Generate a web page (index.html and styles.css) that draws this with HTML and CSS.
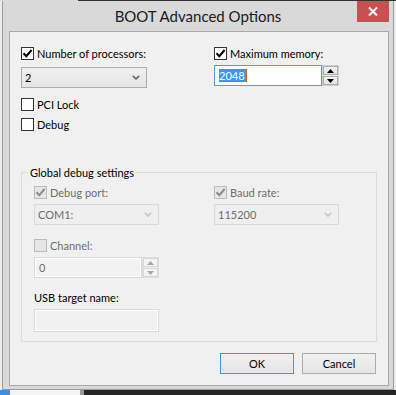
FILE: index.html
```html
<!DOCTYPE html>
<html lang="en">
<head>
<meta charset="utf-8">
<title>BOOT Advanced Options</title>
<link rel="stylesheet" href="styles.css">
</head>
<body>
<div class="window">
  <div class="titlebar">
    <span class="title">BOOT Advanced Options</span>
    <div class="close">
      <svg width="10" height="9" viewBox="0 0 10 9"><path d="M1 0.5 L9 8.5 M9 0.5 L1 8.5" stroke="#fff" stroke-width="2" fill="none"/></svg>
    </div>
  </div>
  <div class="client">
    <div class="cols top">
      <div class="col">
        <div class="check-row">
          <span class="cb"><svg class="tick" width="11" height="11" viewBox="0 0 11 11"><path d="M1.5 5.2 L4.3 8.2 L9.6 2" /></svg></span>
          <span>Number of processors:</span>
        </div>
        <div class="combo first">
          <span class="val">2</span>
          <svg class="chev" width="8" height="5" viewBox="0 0 8 5"><path d="M0.8 0.8 L4 4 L7.2 0.8"/></svg>
        </div>
        <div class="check-row pci"><span class="cb"></span><span>PCI Lock</span></div>
        <div class="check-row dbg"><span class="cb"></span><span>Debug</span></div>
      </div>
      <div class="col">
        <div class="check-row">
          <span class="cb"><svg class="tick" width="11" height="11" viewBox="0 0 11 11"><path d="M1.5 5.2 L4.3 8.2 L9.6 2" /></svg></span>
          <span>Maximum memory:</span>
        </div>
        <div class="spin mem">
          <div class="spin-input focused"><span class="sel">2048</span><span class="caret"></span></div>
          <div class="spin-btns">
            <span class="sb"><svg width="7" height="4" viewBox="0 0 7 4"><polygon points="0,4 3.5,0 7,4"/></svg></span>
            <span class="sb"><svg width="7" height="4" viewBox="0 0 7 4"><polygon points="0,0 7,0 3.5,4"/></svg></span>
          </div>
        </div>
      </div>
    </div>

    <fieldset class="group">
      <legend>Global debug settings</legend>
      <div class="group-body">
        <div class="cols inner">
          <div class="col">
            <div class="check-row disabled">
              <span class="cb"><svg class="tick" width="11" height="11" viewBox="0 0 11 11"><path d="M1.5 5.2 L4.3 8.2 L9.6 2" /></svg></span>
              <span>Debug port:</span>
            </div>
            <div class="combo disabled">
              <span class="val">COM1:</span>
              <svg class="chev" width="8" height="5" viewBox="0 0 8 5"><path d="M0.8 0.8 L4 4 L7.2 0.8"/></svg>
            </div>
          </div>
          <div class="col">
            <div class="check-row disabled">
              <span class="cb"><svg class="tick" width="11" height="11" viewBox="0 0 11 11"><path d="M1.5 5.2 L4.3 8.2 L9.6 2" /></svg></span>
              <span>Baud rate:</span>
            </div>
            <div class="combo disabled">
              <span class="val">115200</span>
              <svg class="chev" width="8" height="5" viewBox="0 0 8 5"><path d="M0.8 0.8 L4 4 L7.2 0.8"/></svg>
            </div>
          </div>
        </div>
        <div class="check-row disabled channel"><span class="cb"></span><span>Channel:</span></div>
        <div class="spin disabled chan">
          <div class="spin-input"><span class="plain">0</span></div>
          <div class="spin-btns">
            <span class="sb"><svg width="7" height="4" viewBox="0 0 7 4"><polygon points="0,4 3.5,0 7,4"/></svg></span>
            <span class="sb"><svg width="7" height="4" viewBox="0 0 7 4"><polygon points="0,0 7,0 3.5,4"/></svg></span>
          </div>
        </div>
        <div class="usb-label">USB target name:</div>
        <div class="textbox disabled"></div>
      </div>
    </fieldset>

    <div class="buttons">
      <button class="btn default">OK</button>
      <button class="btn">Cancel</button>
    </div>
  </div>
</div>
</body>
</html>
```

FILE: styles.css
```css
* { box-sizing: border-box; }
html, body { margin: 0; padding: 0; }

body {
  width: 396px;
  height: 395px;
  overflow: hidden;
  font-family: Lato, "Liberation Sans", sans-serif;
  font-size: 11px;
  color: #000;
  background:
    linear-gradient(to right, #3d8fdf 0, #3d8fdf 10px, #f5f5f5 10px, #f5f5f5 80px, #9a9a9a 80px, #9a9a9a 84px, #262626 84px) left bottom / 100% 5px no-repeat,
    linear-gradient(to right, #dadada 0, #dadada 78px, #303030 78px) left top / 100% 1px no-repeat,
    #ececec;
}

.window {
  margin: 1px 0 0 2px;
  width: 392px;
  height: 389px;
  background: #d9d9d9;
  border: 1px solid #9c9c9c;
  border-top: 0;
  display: flex;
  flex-direction: column;
  position: relative;
}

.titlebar {
  height: 30px;
  flex: none;
  display: flex;
  align-items: center;
  justify-content: center;
}

.title {
  font-size: 15px;
  line-height: 30px;
  color: #1a1a1a;
}

.close {
  position: absolute;
  top: 0;
  right: 4px;
  width: 32px;
  height: 21px;
  background: #c75050;
  display: flex;
  align-items: center;
  justify-content: center;
}

.client {
  flex: 1;
  margin: 0 4px 3px 6px;
  border: 1px solid #a9a9a9;
  background: #f0f0f0;
  padding: 15px 11px 0 11px;
  display: flex;
  flex-direction: column;
}

.cols { display: grid; }
.cols.top { grid-template-columns: 193px 1fr; }
.cols.inner { grid-template-columns: 180px 1fr; }
.col { display: flex; flex-direction: column; align-items: flex-start; }

.check-row {
  display: flex;
  align-items: center;
  gap: 3px;
  height: 13px;
  line-height: 13px;
  white-space: nowrap;
}
.check-row.pci { margin-top: 10px; }
.check-row.dbg { margin-top: 7px; }
.check-row.channel { margin-top: 14px; }

.cb {
  flex: none;
  width: 13px;
  height: 13px;
  border: 1px solid #333;
  background: #fff;
  display: flex;
}
.tick path {
  fill: none;
  stroke: #000;
  stroke-width: 2;
}

.check-row.disabled { color: #6d6d6d; }
.check-row.disabled .cb { border-color: #bcbcbc; background: #e6e6e6; }
.check-row.disabled .tick path { stroke: #8d8d8d; }

.combo {
  margin-top: 5px;
  width: 125px;
  height: 21px;
  border: 1px solid #acacac;
  background: linear-gradient(#f0f0f0, #e5e5e5);
  display: flex;
  align-items: center;
  justify-content: space-between;
  padding: 0 6px 0 3px;
}
.combo.first { margin-top: 7px; width: 126px; }
.combo .val { line-height: 13px; }
.chev path {
  fill: none;
  stroke: #5f5f5f;
  stroke-width: 1.6;
}
.combo.disabled {
  border-color: #d9d9d9;
  background: #efefef;
  color: #6d6d6d;
}
.combo.disabled .chev path { stroke: #c4c4c4; }

.spin {
  display: flex;
  height: 21px;
}
.spin.mem { margin-top: 5px; }
.spin.chan { margin-top: 5px; }

.spin-input {
  width: 108px;
  height: 21px;
  border: 1px solid #acacac;
  background: #fff;
  display: flex;
  align-items: center;
  padding-left: 4px;
}
.spin-input.focused { border-color: #569de5; }
.sel {
  background: #3399ff;
  color: #fff;
  line-height: 13px;
  height: 13px;
  padding: 0 1px 0 0;
}
.caret {
  width: 1px;
  height: 13px;
  background: #c46a10;
}

.spin-btns {
  width: 17px;
  height: 21px;
  border: 1px solid #cfcfcf;
  display: flex;
  flex-direction: column;
  gap: 1px;
}
.sb {
  flex: 1;
  border: 1px solid #acacac;
  background: linear-gradient(#f3f3f3, #e4e4e4);
  display: flex;
  align-items: center;
  justify-content: center;
}
.sb polygon { fill: #000; }

.spin.disabled .spin-input {
  border-color: #d9d9d9;
  background: #f2f2f2;
  box-shadow: inset 0 0 0 1px #fff;
  color: #6d6d6d;
}
.spin.disabled .spin-input .plain { line-height: 13px; }
.spin.disabled .spin-btns { border-color: #dedede; }
.spin.disabled .sb { border-color: #d6d6d6; background: #f4f4f4; }
.spin.disabled .sb polygon { fill: #a6a6a6; }

.group {
  margin: 34px 0 0 0;
  padding: 0;
  border: 1px solid #dcdcdc;
  min-width: 0;
}
.group legend {
  margin-left: 6px;
  padding: 0 2px;
  line-height: 15px;
  font-size: 11px;
}
.group-body {
  padding: 6px 12px 9px 12px;
}

.usb-label {
  margin-top: 13px;
  line-height: 13px;
  height: 13px;
}

.textbox {
  margin-top: 5px;
  width: 125px;
  height: 23px;
  border: 1px solid #d9d9d9;
  background: #f0f0f0;
  box-shadow: inset 0 0 0 1px #fff;
}

.buttons {
  display: flex;
  justify-content: flex-end;
  gap: 8px;
  margin: 11px 1px 0 0;
}
.btn {
  width: 74px;
  height: 21px;
  border: 1px solid #acacac;
  background: linear-gradient(#f0f0f0, #e5e5e5);
  font-family: inherit;
  font-size: 11px;
  color: #000;
  padding: 0;
  margin: 0;
  border-radius: 0;
}
.btn.default { border-color: #3399ff; }
```
